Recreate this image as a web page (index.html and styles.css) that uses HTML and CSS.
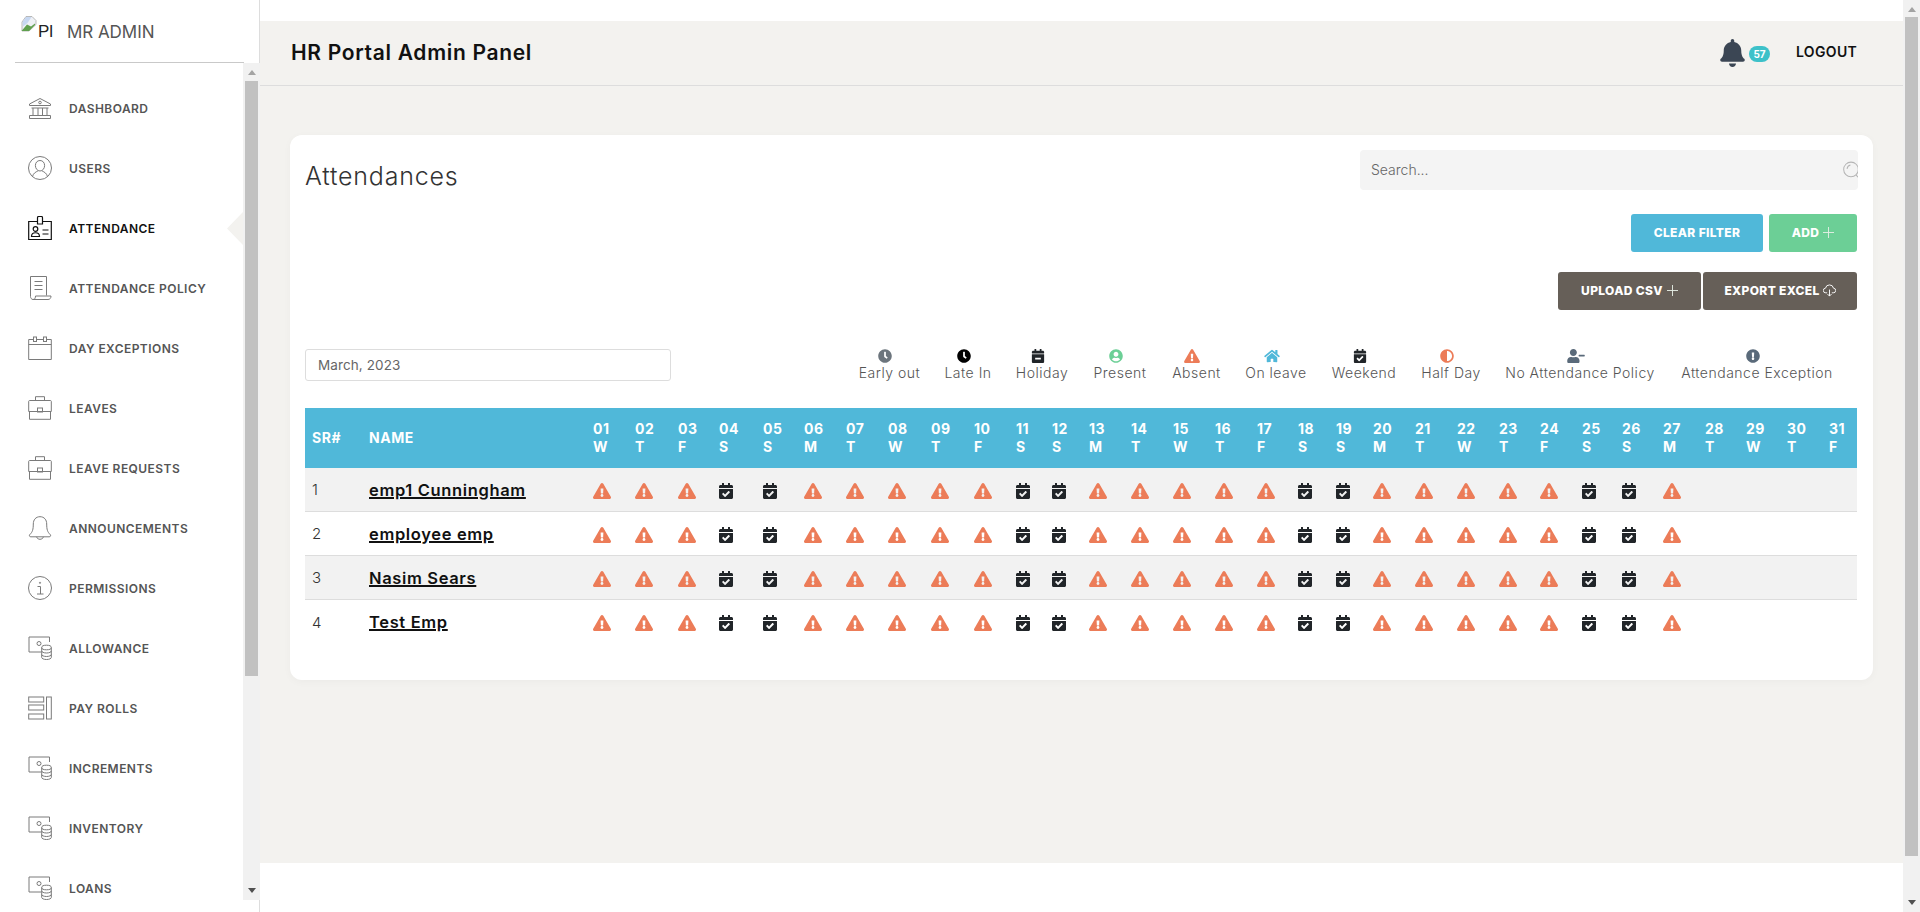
FILE: index.html
```html
<!DOCTYPE html>
<html lang="en">
<head>
<meta charset="utf-8">
<title>HR Portal Admin Panel</title>
<link rel="stylesheet" href="styles.css">
</head>
<body>
<svg class="sprite" aria-hidden="true">
  <symbol id="tri" viewBox="0 0 576 512"><path d="M569.517 440.013C587.975 472.007 564.806 512 527.94 512H48.054c-36.937 0-59.999-40.055-41.577-71.987L246.423 23.985c18.467-32.009 64.72-31.951 83.154 0l239.94 416.028zM288 354c-25.405 0-46 20.595-46 46s20.595 46 46 46 46-20.595 46-46-20.595-46-46-46zm-43.673-165.346l7.418 136c.347 6.364 5.609 11.346 11.982 11.346h48.546c6.373 0 11.635-4.982 11.982-11.346l7.418-136c.375-6.874-5.098-12.654-11.982-12.654h-63.383c-6.884 0-12.356 5.78-11.981 12.654z"/></symbol>
  <symbol id="cal" viewBox="0 0 448 512"><path d="M436 160H12c-6.627 0-12-5.373-12-12v-36c0-26.51 21.49-48 48-48h48V12c0-6.627 5.373-12 12-12h40c6.627 0 12 5.373 12 12v52h128V12c0-6.627 5.373-12 12-12h40c6.627 0 12 5.373 12 12v52h48c26.51 0 48 21.49 48 48v36c0 6.627-5.373 12-12 12zM12 192h424c6.627 0 12 5.373 12 12v260c0 26.51-21.49 48-48 48H48c-26.51 0-48-21.49-48-48V204c0-6.627 5.373-12 12-12zm333.296 95.947l-28.169-28.398c-4.667-4.705-12.265-4.736-16.97-.068L194.12 364.665l-45.98-46.352c-4.667-4.705-12.266-4.736-16.971-.068l-28.397 28.17c-4.705 4.667-4.736 12.265-.068 16.97l82.601 83.269c4.667 4.705 12.265 4.736 16.97.068l142.953-141.805c4.705-4.667 4.736-12.265.068-16.97z"/></symbol>
  <symbol id="calm" viewBox="0 0 448 512"><path d="M436 160H12c-6.6 0-12-5.4-12-12v-36c0-26.5 21.5-48 48-48h48V12c0-6.6 5.4-12 12-12h40c6.600 0 12 5.400 12 12v52h128V12c0-6.600 5.400-12 12-12h40c6.600 0 12 5.400 12 12v52h48c26.500 0 48 21.500 48 48v36c0 6.600-5.400 12-12 12zM12 192h424c6.600 0 12 5.400 12 12v260c0 26.500-21.500 48-48 48H48c-26.500 0-48-21.500-48-48V204c0-6.600 5.400-12 12-12zm304 128H132c-6.600 0-12 5.400-12 12v40c0 6.600 5.400 12 12 12h184c6.600 0 12-5.400 12-12v-40c0-6.600-5.400-12-12-12z" fill-rule="evenodd"/></symbol>
  <symbol id="clock" viewBox="0 0 512 512"><path d="M256,8C119,8,8,119,8,256S119,504,256,504,504,393,504,256,393,8,256,8Zm92.49,313h0l-20,25a16,16,0,0,1-22.49,2.5h0l-67-49.72a40,40,0,0,1-15-31.23V112a16,16,0,0,1,16-16h32a16,16,0,0,1,16,16V256l58,42.5A16,16,0,0,1,348.49,321Z"/></symbol>
  <symbol id="ucircle" viewBox="0 0 496 512"><path d="M248 8C111 8 0 119 0 256s111 248 248 248 248-111 248-248S385 8 248 8zm0 96c48.6 0 88 39.4 88 88s-39.4 88-88 88-88-39.4-88-88 39.4-88 88-88zm0 344c-58.7 0-111.3-26.6-146.5-68.2 18.8-35.4 55.6-59.8 98.5-59.8 2.4 0 4.8.4 7.1 1.100 13 4.200 26.600 6.900 40.900 6.900 14.300 0 28-2.700 40.900-6.900 2.300-.7 4.700-1.100 7.100-1.100 42.900 0 79.700 24.400 98.500 59.800C359.300 421.400 306.700 448 248 448z"/></symbol>
  <symbol id="home" viewBox="0 0 576 512"><path d="M280.37 148.26L96 300.11V464a16 16 0 0 0 16 16l112.06-.29a16 16 0 0 0 15.92-16V368a16 16 0 0 1 16-16h64a16 16 0 0 1 16 16v95.64a16 16 0 0 0 16 16.05L464 480a16 16 0 0 0 16-16V300L295.67 148.26a12.19 12.19 0 0 0-15.3 0zM571.6 251.47L488 182.56V44.05a12 12 0 0 0-12-12h-56a12 12 0 0 0-12 12v72.61L318.47 43a48 48 0 0 0-61 0L4.34 251.47a12 12 0 0 0-1.6 16.9l25.5 31A12 12 0 0 0 45.15 301l235.22-193.74a12.19 12.19 0 0 1 15.3 0L530.9 301a12 12 0 0 0 16.9-1.6l25.5-31a12 12 0 0 0-1.7-16.93z"/></symbol>
  <symbol id="adjust" viewBox="0 0 512 512"><path d="M8 256c0 136.966 111.033 248 248 248s248-111.034 248-248S392.966 8 256 8 8 119.033 8 256zm248 184V72c101.705 0 184 82.311 184 184 0 101.705-82.311 184-184 184z"/></symbol>
  <symbol id="uminus" viewBox="0 0 640 512"><path d="M624 208H432c-8.800 0-16 7.200-16 16v32c0 8.800 7.200 16 16 16h192c8.800 0 16-7.200 16-16v-32c0-8.800-7.200-16-16-16zm-400 48c70.700 0 128-57.300 128-128S294.700 0 224 0 96 57.300 96 128s57.300 128 128 128zm89.600 32h-16.700c-22.200 10.200-46.900 16-72.900 16s-50.600-5.800-72.900-16h-16.700C60.200 288 0 348.200 0 422.400V464c0 26.500 21.500 48 48 48h352c26.500 0 48-21.500 48-48v-41.600c0-74.200-60.200-134.400-134.400-134.400z"/></symbol>
  <symbol id="excl" viewBox="0 0 512 512"><path d="M504 256c0 136.997-111.043 248-248 248S8 392.997 8 256C8 119.083 119.043 8 256 8s248 111.083 248 248zm-248 50c-25.405 0-46 20.595-46 46s20.595 46 46 46 46-20.595 46-46-20.595-46-46-46zm-43.673-165.346l7.418 136c.347 6.364 5.609 11.346 11.982 11.346h48.546c6.373 0 11.635-4.982 11.982-11.346l7.418-136c.375-6.874-5.098-12.654-11.982-12.654h-63.383c-6.884 0-12.356 5.78-11.981 12.654z"/></symbol>
  <symbol id="bell" viewBox="0 0 448 512"><path d="M224 512c35.320 0 63.970-28.650 63.970-64H160.030c0 35.350 28.650 64 63.970 64zm215.390-149.710c-19.320-20.760-55.470-51.990-55.470-154.290 0-77.700-54.480-139.900-127.940-155.160V32c0-17.670-14.320-32-31.980-32s-31.980 14.330-31.980 32v20.840C118.560 68.100 64.080 130.300 64.080 208c0 102.300-36.150 133.530-55.470 154.290-6 6.450-8.660 14.160-8.610 21.710.11 16.400 12.980 32 32.100 32h383.800c19.120 0 32-15.600 32.100-32 .05-7.550-2.610-15.270-8.610-21.710z"/></symbol>
  <symbol id="n-bank" viewBox="0 0 24 24"><path d="M1.500 8 12 2.500 22.500 8v1.500h-21zM3.500 12h17M5 12v7.500M10 12v7.500M14.500 12v7.500M19 12v7.500M1.500 19.500h21v3h-21z"/><circle cx="12" cy="6.500" r="1.300"/></symbol>
  <symbol id="n-user" viewBox="0 0 24 24"><circle cx="12" cy="12" r="11.500"/><path d="M12 4.500c2.800 0 4.600 2.200 4.600 5s-1.800 5.500-4.600 5.500-4.600-2.700-4.600-5.500 1.800-5 4.600-5zM4.500 20.500c.8-3.200 3.300-4.700 5.300-5.400M19.500 20.500c-.8-3.200-3.300-4.700-5.300-5.400"/></symbol>
  <symbol id="n-id" viewBox="0 0 24 24"><path d="M9.500 5.500H.7v18h22.600v-18h-8.800M9.500 1.800c0-.7.500-1.300 1.200-1.300h2.600c.7 0 1.200.600 1.200 1.300v6.200h-5z"/><circle cx="7.500" cy="13" r="2.300"/><path d="M3.500 20.500c0-5 8-5 8 0zM14.500 14h6M14.500 18h6"/></symbol>
  <symbol id="n-doc" viewBox="0 0 24 24"><path d="M2.500 20.500V.5h16v19M6.500 5.500h8M6.500 9.500h8M6.500 13.500h8M2.500 20.500c0 1.500 1 3 2.500 3h15c2 0 3-1.500 3-3.500H7.500c0 1.500-.5 3.500-2.500 3.500"/></symbol>
  <symbol id="n-cal" viewBox="0 0 24 24"><path d="M5 3.500H.7v20h22.600v-20H19M9 3.500h6M.7 8.500h22.600"/><rect x="5.500" y="1" width="3" height="4.500"/><rect x="15.500" y="1" width="3" height="4.500"/></symbol>
  <symbol id="n-case" viewBox="0 0 24 24"><path d="M7.500 4V.7h9V4M1.500 4.500h21c.4 0 .8.400.8.800v10.200H.7V5.300c0-.4.400-.8.800-.8zM1.500 15.500v7.800h21v-7.800"/><rect x="9.500" y="12" width="5" height="4"/></symbol>
  <symbol id="n-bell" viewBox="0 0 24 24"><path d="M12 .7C7.800.7 5.300 3.800 5.300 8c0 5.500-.8 8-3.300 10.300-1.200 1.200-.6 2.500.8 2.500h18.400c1.400 0 2-1.300.8-2.500C19.500 16 18.700 13.500 18.700 8c0-4.200-2.500-7.300-6.700-7.300zM8.500 20.800c.5 1.600 2 2.500 3.500 2.500s3-.9 3.500-2.500"/></symbol>
  <symbol id="n-info" viewBox="0 0 24 24"><circle cx="12" cy="12" r="11.500"/><path d="M9.500 10.500H12.500v7.500M9 18h6.500"/><circle cx="12" cy="6.800" r=".6"/></symbol>
  <symbol id="n-coin" viewBox="0 0 24 24"><path d="M1 1h20.500v5M1 1v15h12"/><circle cx="11" cy="7.500" r="2"/><ellipse cx="18.500" cy="11.500" rx="4.800" ry="2.300"/><path d="M13.700 11.500v10c0 1 2 2 4.800 2s4.800-1 4.800-2v-10M13.700 15c0 1 2 2 4.800 2s4.800-1 4.800-2M13.700 18.500c0 1 2 2 4.800 2s4.800-1 4.800-2"/></symbol>
  <symbol id="n-bars" viewBox="0 0 24 24"><rect x=".7" y="1" width="15" height="5"/><rect x=".7" y="9" width="15" height="5"/><rect x=".7" y="18" width="15" height="5"/><rect x="18.500" y="1" width="4.800" height="22"/></symbol>
</svg>

<div class="app">
  <aside class="sidebar">
    <div class="brand">
      <span class="logo">
        <svg class="broken" viewBox="0 0 16 16"><path class="b-sheet" d="M5 .5h6l4 4v4L8 15H1V6z"/><path class="b-hill" d="M.5 15 6 8.500l4 2L14 7.500V9l-6 6z"/><path class="b-sky" d="M5 1h5.500l-4 6L2 10.500 1.500 6z"/></svg><span class="alt">Pl</span>
      </span>
      <span class="brand-name">MR ADMIN</span>
    </div>
    <div class="nav-wrap">
      <nav class="nav">
        <a class="nav-item"><svg class="nav-ic"><use href="#n-bank"/></svg>DASHBOARD</a>
        <a class="nav-item"><svg class="nav-ic"><use href="#n-user"/></svg>USERS</a>
        <a class="nav-item active"><svg class="nav-ic"><use href="#n-id"/></svg>ATTENDANCE<span class="pointer"></span></a>
        <a class="nav-item"><svg class="nav-ic"><use href="#n-doc"/></svg>ATTENDANCE POLICY</a>
        <a class="nav-item"><svg class="nav-ic"><use href="#n-cal"/></svg>DAY EXCEPTIONS</a>
        <a class="nav-item"><svg class="nav-ic"><use href="#n-case"/></svg>LEAVES</a>
        <a class="nav-item"><svg class="nav-ic"><use href="#n-case"/></svg>LEAVE REQUESTS</a>
        <a class="nav-item"><svg class="nav-ic"><use href="#n-bell"/></svg>ANNOUNCEMENTS</a>
        <a class="nav-item"><svg class="nav-ic"><use href="#n-info"/></svg>PERMISSIONS</a>
        <a class="nav-item"><svg class="nav-ic"><use href="#n-coin"/></svg>ALLOWANCE</a>
        <a class="nav-item"><svg class="nav-ic"><use href="#n-bars"/></svg>PAY ROLLS</a>
        <a class="nav-item"><svg class="nav-ic"><use href="#n-coin"/></svg>INCREMENTS</a>
        <a class="nav-item"><svg class="nav-ic"><use href="#n-coin"/></svg>INVENTORY</a>
        <a class="nav-item"><svg class="nav-ic"><use href="#n-coin"/></svg>LOANS</a>
      </nav>
      <div class="sb sb-side"><i class="arr up"></i><b class="thumb"></b><i class="arr down"></i></div>
    </div>
  </aside>

  <main class="main">
    <header class="topbar">
      <h1 class="app-title">HR Portal Admin Panel</h1>
      <div class="top-actions">
        <span class="notif"><svg class="bell"><use href="#bell"/></svg><span class="badge">57</span></span>
        <a class="logout">LOGOUT</a>
      </div>
    </header>
    <section class="content">
      <div class="card">
        <div class="card-top">
          <h2 class="card-title">Attendances</h2>
          <div class="search">
            <span class="search-text">Search...</span>
            <svg class="search-ic" viewBox="0 0 16 16"><circle cx="8" cy="7.500" r="6.500"/><path d="M4.500 7a4 4 0 0 1 3-3.500M12.500 12.500l3.500 3.500"/></svg>
          </div>
        </div>
        <div class="btn-row first">
          <a class="btn blue">CLEAR FILTER</a>
          <a class="btn green">ADD<svg class="plus" viewBox="0 0 12 12"><path d="M6 0v12M0 6h12"/></svg></a>
        </div>
        <div class="btn-row second">
          <a class="btn dark upload">UPLOAD CSV<svg class="plus" viewBox="0 0 12 12"><path d="M6 0v12M0 6h12"/></svg></a>
          <a class="btn dark export">EXPORT EXCEL<svg class="cloud" viewBox="0 0 14 14"><path d="M4.500 9.500H3a2.500 2.500 0 0 1-.3-5A4.300 4.300 0 0 1 7 1a4.300 4.300 0 0 1 4.300 3.500 2.500 2.500 0 0 1-.3 5H9.500M7 6v7M4.800 10.800 7 13l2.200-2.200"/></svg></a>
        </div>
        <div class="filter-row">
          <div class="date-input">March, 2023</div>
          <ul class="legend">
            <li><svg class="lg c-grey"><use href="#clock"/></svg>Early out</li>
            <li><svg class="lg c-black"><use href="#clock"/></svg>Late In</li>
            <li><svg class="lg c-ink"><use href="#calm"/></svg>Holiday</li>
            <li><svg class="lg c-green"><use href="#ucircle"/></svg>Present</li>
            <li><svg class="lg c-red"><use href="#tri"/></svg>Absent</li>
            <li><svg class="lg c-blue"><use href="#home"/></svg>On leave</li>
            <li><svg class="lg c-ink"><use href="#cal"/></svg>Weekend</li>
            <li><svg class="lg c-red"><use href="#adjust"/></svg>Half Day</li>
            <li><svg class="lg c-slate"><use href="#uminus"/></svg>No Attendance Policy</li>
            <li><svg class="lg c-slate"><use href="#excl"/></svg>Attendance Exception</li>
          </ul>
        </div>
        <div class="table">
          <div class="grid head">
            <span>SR#</span><span>NAME</span>
            <span>01<br>W</span><span>02<br>T</span><span>03<br>F</span><span>04<br>S</span><span>05<br>S</span><span>06<br>M</span><span>07<br>T</span><span>08<br>W</span><span>09<br>T</span><span>10<br>F</span><span>11<br>S</span><span>12<br>S</span><span>13<br>M</span><span>14<br>T</span><span>15<br>W</span><span>16<br>T</span><span>17<br>F</span><span>18<br>S</span><span>19<br>S</span><span>20<br>M</span><span>21<br>T</span><span>22<br>W</span><span>23<br>T</span><span>24<br>F</span><span>25<br>S</span><span>26<br>S</span><span>27<br>M</span><span>28<br>T</span><span>29<br>W</span><span>30<br>T</span><span>31<br>F</span>
          </div>
          <div class="grid row odd">
            <span class="sr">1</span><a class="emp">emp1 Cunningham</a>
            <svg class="tri"><use href="#tri"/></svg><svg class="tri"><use href="#tri"/></svg><svg class="tri"><use href="#tri"/></svg><svg class="cal"><use href="#cal"/></svg><svg class="cal"><use href="#cal"/></svg><svg class="tri"><use href="#tri"/></svg><svg class="tri"><use href="#tri"/></svg><svg class="tri"><use href="#tri"/></svg><svg class="tri"><use href="#tri"/></svg><svg class="tri"><use href="#tri"/></svg><svg class="cal"><use href="#cal"/></svg><svg class="cal"><use href="#cal"/></svg><svg class="tri"><use href="#tri"/></svg><svg class="tri"><use href="#tri"/></svg><svg class="tri"><use href="#tri"/></svg><svg class="tri"><use href="#tri"/></svg><svg class="tri"><use href="#tri"/></svg><svg class="cal"><use href="#cal"/></svg><svg class="cal"><use href="#cal"/></svg><svg class="tri"><use href="#tri"/></svg><svg class="tri"><use href="#tri"/></svg><svg class="tri"><use href="#tri"/></svg><svg class="tri"><use href="#tri"/></svg><svg class="tri"><use href="#tri"/></svg><svg class="cal"><use href="#cal"/></svg><svg class="cal"><use href="#cal"/></svg><svg class="tri"><use href="#tri"/></svg>
          </div>
          <div class="grid row">
            <span class="sr">2</span><a class="emp">employee emp</a>
            <svg class="tri"><use href="#tri"/></svg><svg class="tri"><use href="#tri"/></svg><svg class="tri"><use href="#tri"/></svg><svg class="cal"><use href="#cal"/></svg><svg class="cal"><use href="#cal"/></svg><svg class="tri"><use href="#tri"/></svg><svg class="tri"><use href="#tri"/></svg><svg class="tri"><use href="#tri"/></svg><svg class="tri"><use href="#tri"/></svg><svg class="tri"><use href="#tri"/></svg><svg class="cal"><use href="#cal"/></svg><svg class="cal"><use href="#cal"/></svg><svg class="tri"><use href="#tri"/></svg><svg class="tri"><use href="#tri"/></svg><svg class="tri"><use href="#tri"/></svg><svg class="tri"><use href="#tri"/></svg><svg class="tri"><use href="#tri"/></svg><svg class="cal"><use href="#cal"/></svg><svg class="cal"><use href="#cal"/></svg><svg class="tri"><use href="#tri"/></svg><svg class="tri"><use href="#tri"/></svg><svg class="tri"><use href="#tri"/></svg><svg class="tri"><use href="#tri"/></svg><svg class="tri"><use href="#tri"/></svg><svg class="cal"><use href="#cal"/></svg><svg class="cal"><use href="#cal"/></svg><svg class="tri"><use href="#tri"/></svg>
          </div>
          <div class="grid row odd">
            <span class="sr">3</span><a class="emp">Nasim Sears</a>
            <svg class="tri"><use href="#tri"/></svg><svg class="tri"><use href="#tri"/></svg><svg class="tri"><use href="#tri"/></svg><svg class="cal"><use href="#cal"/></svg><svg class="cal"><use href="#cal"/></svg><svg class="tri"><use href="#tri"/></svg><svg class="tri"><use href="#tri"/></svg><svg class="tri"><use href="#tri"/></svg><svg class="tri"><use href="#tri"/></svg><svg class="tri"><use href="#tri"/></svg><svg class="cal"><use href="#cal"/></svg><svg class="cal"><use href="#cal"/></svg><svg class="tri"><use href="#tri"/></svg><svg class="tri"><use href="#tri"/></svg><svg class="tri"><use href="#tri"/></svg><svg class="tri"><use href="#tri"/></svg><svg class="tri"><use href="#tri"/></svg><svg class="cal"><use href="#cal"/></svg><svg class="cal"><use href="#cal"/></svg><svg class="tri"><use href="#tri"/></svg><svg class="tri"><use href="#tri"/></svg><svg class="tri"><use href="#tri"/></svg><svg class="tri"><use href="#tri"/></svg><svg class="tri"><use href="#tri"/></svg><svg class="cal"><use href="#cal"/></svg><svg class="cal"><use href="#cal"/></svg><svg class="tri"><use href="#tri"/></svg>
          </div>
          <div class="grid row last">
            <span class="sr">4</span><a class="emp">Test Emp</a>
            <svg class="tri"><use href="#tri"/></svg><svg class="tri"><use href="#tri"/></svg><svg class="tri"><use href="#tri"/></svg><svg class="cal"><use href="#cal"/></svg><svg class="cal"><use href="#cal"/></svg><svg class="tri"><use href="#tri"/></svg><svg class="tri"><use href="#tri"/></svg><svg class="tri"><use href="#tri"/></svg><svg class="tri"><use href="#tri"/></svg><svg class="tri"><use href="#tri"/></svg><svg class="cal"><use href="#cal"/></svg><svg class="cal"><use href="#cal"/></svg><svg class="tri"><use href="#tri"/></svg><svg class="tri"><use href="#tri"/></svg><svg class="tri"><use href="#tri"/></svg><svg class="tri"><use href="#tri"/></svg><svg class="tri"><use href="#tri"/></svg><svg class="cal"><use href="#cal"/></svg><svg class="cal"><use href="#cal"/></svg><svg class="tri"><use href="#tri"/></svg><svg class="tri"><use href="#tri"/></svg><svg class="tri"><use href="#tri"/></svg><svg class="tri"><use href="#tri"/></svg><svg class="tri"><use href="#tri"/></svg><svg class="cal"><use href="#cal"/></svg><svg class="cal"><use href="#cal"/></svg><svg class="tri"><use href="#tri"/></svg>
          </div>
        </div>
      </div>
    </section>
  </main>

  <div class="sb sb-page"><i class="arr up"></i><b class="thumb"></b><i class="arr down"></i></div>
</div>
</body>
</html>
```

FILE: styles.css
```css
* { box-sizing: border-box; }
html, body { margin: 0; height: 912px; overflow: hidden; background: #fff; }
body { font-family: Inter, "Noto Sans", sans-serif; color: #333; }
.sprite { display: none; }
a { color: inherit; text-decoration: none; }
h1, h2, ul { margin: 0; padding: 0; }

.app { display: flex; height: 912px; }

/* Sidebar */
.sidebar { width: 260px; flex: none; display: flex; flex-direction: column; border-right: 1px solid #ddd; background: #fff; height: 912px; }
.brand { height: 63px; flex: none; margin: 0 15px; border-bottom: 1px solid #c9c9c9; display: flex; align-items: flex-start; padding-top: 16px; }
.logo { width: 40px; height: 24px; margin-left: 6px; display: flex; overflow: hidden; font-size: 17px; line-height: 16px; color: #222; }
.broken { width: 16px; height: 16px; flex: none; }
.b-sheet { fill: #eef1f6; stroke: #a9a9a9; stroke-width: .8; }
.b-hill { fill: #5fa04e; }
.b-sky { fill: #c7d8f2; }
.alt { padding-top: 8px; padding-left: 1px; font-family: "Liberation Sans", sans-serif; }
.brand-name { margin-left: 6px; margin-top: 6px; font-size: 17px; line-height: 20px; font-weight: 400; color: #555; letter-spacing: -.05px; }

.nav-wrap { display: flex; height: 837px; flex: none; margin-right: -1px; }
.nav { flex: 1; overflow: hidden; padding-top: 15px; position: relative; }
.nav-item { height: 60px; display: flex; align-items: center; padding-left: 28px; font-size: 12px; font-weight: 600; color: #555; letter-spacing: .45px; position: relative; white-space: nowrap; }
.nav-ic { width: 24px; height: 24px; margin-right: 17px; flex: none; fill: none; stroke: #7a7a7a; stroke-width: 1; }
.nav-item.active { color: #111; }
.active .nav-ic { stroke: #111; stroke-width: 1.2; }
.pointer { position: absolute; right: 0; top: 14px; width: 16px; height: 33px; background: #f3f2ef; clip-path: polygon(100% 0, 100% 100%, 0 50%); }

/* Fake scrollbars */
.sb { background: #f1f1f1; display: flex; flex-direction: column; flex: none; width: 17px; position: relative; }
.sb-side { width: 17px; }
.thumb { display: block; width: 13px; margin-left: 2px; background: #c1c1c1; }
.sb-side .thumb { height: 595px; margin-top: 18px; }
.sb-page { height: 912px; }
.sb-page .thumb { height: 839px; margin-top: 17px; }
.arr { position: absolute; left: 5px; width: 0; height: 0; border-left: 4px solid transparent; border-right: 4px solid transparent; }
.arr.up { top: 7px; border-bottom: 5px solid #a3a3a3; }
.arr.down { bottom: 7px; border-top: 5px solid #505050; }

/* Main */
.main { width: 1643px; flex: none; padding-top: 21px; display: flex; flex-direction: column; height: 912px; background: #fff; }
.topbar { height: 65px; flex: none; background: #f3f2ef; border-bottom: 1px solid #ddd; display: flex; align-items: center; justify-content: space-between; padding: 0 45px 0 31px; }
.app-title { font-size: 21px; font-weight: 600; color: #111; letter-spacing: .68px; line-height: 24px; }
.top-actions { display: flex; align-items: center; }
.notif { display: flex; align-items: flex-start; height: 28px; margin-right: 26px; }
.bell { width: 27px; height: 28px; fill: #3b4654; flex: none; }
.badge { width: 21px; height: 16px; margin-top: 7px; margin-left: 3px; border-radius: 8px; background: #3dc1c9; color: #fff; font-size: 10px; font-weight: 700; line-height: 16px; text-align: center; }
.logout { font-size: 14px; font-weight: 600; color: #111; width: 62px; white-space: nowrap; letter-spacing: .35px; margin-bottom: 4px; }

.content { height: 777px; flex: none; background: #f3f2ef; padding: 49px 30px 0; }
.card { height: 545px; width: 1583px; background: #fff; border-radius: 12px; padding: 15px 15px 0; box-shadow: 0 2px 8px rgba(0,0,0,.03); }
.card-top { display: flex; justify-content: space-between; align-items: center; height: 40px; }
.card-title { font-size: 25px; font-weight: 300; color: #333; letter-spacing: .8px; line-height: 40px; padding-top: 12px; height: 52px; }
.search { width: 498px; height: 40px; background: #f4f4f4; border-radius: 4px; display: flex; align-items: center; justify-content: space-between; padding-left: 11px; overflow: hidden; }
.search-text { font-size: 14px; font-weight: 300; color: #666; margin-bottom: 2px; }
.search-ic { width: 18px; height: 18px; margin-right: -2px; margin-bottom: 1px; fill: none; stroke: #b5b5b5; stroke-width: .9; }

.btn-row { display: flex; justify-content: flex-end; padding-right: 1px; }
.btn-row.first { margin-top: 24px; gap: 6px; }
.btn-row.second { margin-top: 20px; gap: 2px; }
.btn { height: 38px; border-radius: 3px; color: #fff; font-size: 12px; font-weight: 800; display: flex; align-items: center; justify-content: center; letter-spacing: .35px; white-space: nowrap; padding-bottom: 1px; }
.blue { width: 132px; background: #50b8d9; }
.green { width: 88px; background: #6ccf96; }
.dark { background: #665f58; }
.upload { width: 143px; }
.export { width: 154px; }
.plus { width: 11px; height: 11px; margin-left: 4px; fill: none; stroke: #e6efe6; stroke-width: 1; }
.cloud { width: 13px; height: 13px; margin-left: 3px; fill: none; stroke: #fff; stroke-width: 1; }

.filter-row { display: flex; justify-content: space-between; margin-top: 39px; height: 59px; }
.date-input { width: 366px; height: 32px; border: 1px solid #ddd; border-radius: 3px; padding-left: 12px; font-size: 13.5px; font-weight: 400; color: #666; line-height: 30px; letter-spacing: .1px; }
.legend { list-style: none; display: grid; grid-template-columns: 61px 46px 52px 54px 49px 60px 66px 58px 150px 154px; column-gap: 25px; margin-right: 24px; }
.legend li { display: flex; flex-direction: column; align-items: center; font-size: 14px; line-height: 20px; color: #555; white-space: nowrap; height: 40px; letter-spacing: .5px; font-weight: 300; }
.lg { height: 14px; width: 18px; display: block; margin-right: 9px; }
.c-grey { fill: #6c757d; }
.c-black { fill: #000; }
.c-ink { fill: #212529; }
.c-green { fill: #6ccf96; }
.c-red { fill: #ec7c58; }
.c-blue { fill: #50b8d9; }
.c-slate { fill: #5a6a7a; }

.table { width: 1552px; }
.grid { display: grid; grid-template-columns: 57px 224px 42px 43px 41px 44px 41px 42px 42px 43px 43px 42px 36px 37px 42px 42px 42px 42px 41px 38px 37px 42px 42px 42px 41px 42px 40px 41px 42px 41px 41px 42px 35px; align-items: center; }
.grid > * { margin-left: 7px; }
.head { height: 60px; background: #50b8d9; color: #fff; font-size: 14px; font-weight: 700; line-height: 18px; white-space: nowrap; letter-spacing: .55px; }
.row { height: 44px; border-bottom: 1px solid #ddd; }
.row.last { border-bottom: 0; }
.row.odd { background: #f2f2f2; }
.sr { font-size: 15px; font-weight: 300; color: #333; }
.emp { font-size: 16.5px; font-weight: 600; color: #111; text-decoration: underline; text-decoration-thickness: 1.5px; white-space: nowrap; letter-spacing: .65px; }
.tri { width: 18px; height: 16px; fill: #ec7c58; margin-top: 2px; }
.cal { width: 14px; height: 16px; fill: #212529; margin-top: 2px; }
```
